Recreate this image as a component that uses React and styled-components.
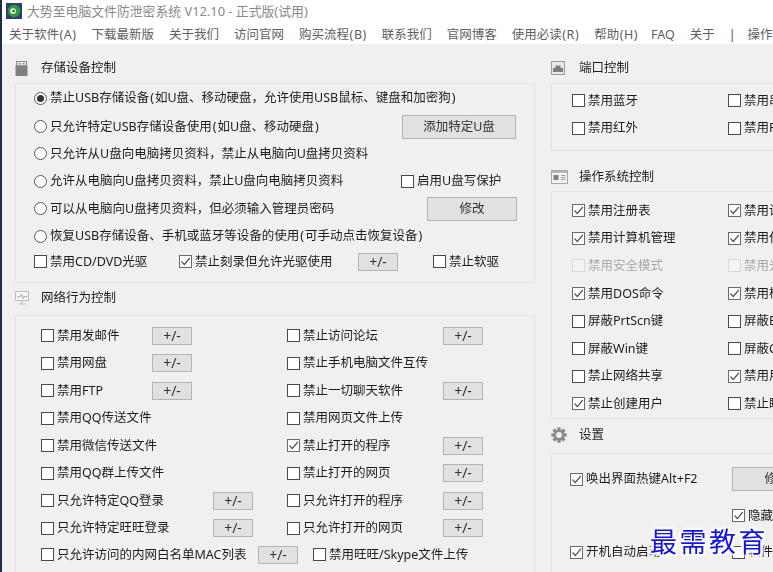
import React from "react";
import styled, { createGlobalStyle } from "styled-components";

const Global = createGlobalStyle`
  html, body { margin: 0; padding: 0; background: #f0f0f0; overflow: hidden; }
  #root { width: 773px; height: 572px; }
`;

const Page = styled.div`
  position: relative;
  width: 773px;
  height: 572px;
  overflow: hidden;
  background: #f0f0f0;
  font: 12.5px/16px "Noto Sans", "Noto Sans CJK SC", sans-serif;
  color: #1c1c1c;
  border-left: 2px solid #1c2f4a;
  box-sizing: border-box;
`;
const Soft = styled.div`
  filter: blur(0.35px);
`;
const TitleBar = styled.div`
  height: 22px;
  background: #fff;
  display: flex;
  align-items: center;
  padding: 0 0 0 4px;
  box-sizing: border-box;
  gap: 5px;
  color: #8a8a8a;
  font-size: 12.85px;
  white-space: nowrap;
`;
const MenuBar = styled.div`
  height: 22px;
  box-sizing: border-box;
  padding: 4px 0 0 7px;
  background: #fff;
  display: flex;
  align-items: center;
  gap: 15px;
  color: #5e5e5e;
  white-space: nowrap;
  overflow: hidden;
`;
const MenuItem = styled.span`
  margin-left: ${p => p.$ml || 0}px;
`;
const Divider = styled.span`
  margin: 0 -3px 0 -1px;
  color: #555;
`;
const Paren = styled.span`
  margin: 0 ${p => p.$m ?? 1}px;
`;
const Columns = styled.div`
  display: flex;
  padding-left: 13px;
  gap: 16px;
`;
const Column = styled.div`
  flex: 0 0 ${p => p.$w}px;
  width: ${p => p.$w}px;
`;
const Heading = styled.div`
  display: flex;
  align-items: center;
  height: 16px;
  padding: ${p => p.$pt}px 0 ${p => p.$pb}px;
  white-space: nowrap;
`;
const HeadIcon = styled.span`
  flex: 0 0 ${p => p.$w}px;
  width: ${p => p.$w}px;
  display: flex;
  align-items: center;
`;
const Panel = styled.div`
  border: 1px solid #e2e2e2;
  border-right: ${p => (p.$open ? "none" : "1px solid #e2e2e2")};
  padding: ${p => p.$pt || 0}px 0 ${p => p.$pb || 0}px ${p => p.$pl}px;
  height: ${p => p.$h}px;
  box-sizing: border-box;
`;
const Row = styled.div`
  display: flex;
  align-items: center;
  height: ${p => p.$h || 27.4}px;
  white-space: nowrap;
`;
const Item = styled.div`
  display: flex;
  align-items: center;
  flex: 0 0 auto;
  gap: ${p => p.$gap || 3}px;
  width: ${p => (p.$w ? p.$w + "px" : "auto")};
  margin-left: ${p => p.$ml || 0}px;
  color: ${p => (p.$off ? "#a8a8a8" : "inherit")};
`;
const Box = styled.span`
  flex: 0 0 13px;
  width: 13px;
  height: 13px;
  box-sizing: border-box;
  border: 1px solid ${p => (p.$off ? "#d9d9d9" : p.$on ? "#6a6a6a" : "#4a4a4a")};
  background: ${p => (p.$off ? "#f4f4f4" : "#fff")};
  display: flex;
  align-items: center;
  justify-content: center;
`;
const Circle = styled.span`
  flex: 0 0 13px;
  width: 13px;
  height: 13px;
  box-sizing: border-box;
  border: 1px solid #555;
  border-radius: 50%;
  background: #fff;
  display: flex;
  align-items: center;
  justify-content: center;
`;
const Dot = styled.span`
  width: 7px;
  height: 7px;
  border-radius: 50%;
  background: #333;
`;
const Btn = styled.div`
  flex: 0 0 ${p => p.$w || 40}px;
  width: ${p => p.$w || 40}px;
  height: ${p => p.$h || 18}px;
  box-sizing: border-box;
  border: 1px solid #b4b4b4;
  background: #e1e1e1;
  display: flex;
  align-items: center;
  justify-content: center;
  color: #333;
`;
const SignBtn = styled(Btn).attrs({ children: "+/-" })`
  font-size: 14px;
`;
const Grid = styled.div`
  display: grid;
  grid-template-columns: ${p => p.$col}px 1fr;
  white-space: nowrap;
`;
const Cell = styled.div`
  display: flex;
  align-items: center;
  height: ${p => p.$h || 27.5}px;
`;
const Watermark = styled.div`
  position: absolute;
  left: 648px;
  top: 525px;
  font: 400 27px/32px "Noto Sans CJK SC", sans-serif;
  letter-spacing: 2.5px;
  color: #1414e6;
  text-shadow: 0 0 2px #fff, 0 0 3px #fff, 2px 2px 2px #fff, -2px -2px 2px #fff, 2px -2px 2px #fff, -2px 2px 2px #fff, 2px 0 2px #fff, -2px 0 2px #fff;
  white-space: nowrap;
`;

const Tick = () => (
  <svg width="11" height="11" viewBox="0 0 11 11">
    <path d="M1.5 5.5 L4.3 8.5 L9.8 2" fill="none" stroke="#555" strokeWidth="1.2" />
  </svg>
);
const Check = ({ label, on, off, w, ml }) => (
  <Item $w={w} $ml={ml} $off={off}>
    <Box $on={on} $off={off}>{on && <Tick />}</Box>
    <span>{label}</span>
  </Item>
);
const Radio = ({ label, on, w }) => (
  <Item $w={w} $gap={3}>
    <Circle>{on && <Dot />}</Circle>
    <span>{label}</span>
  </Item>
);

const Logo = () => (
  <svg width="16" height="16" viewBox="0 0 18 18">
    <rect width="18" height="18" fill="#2b3f73" />
    <circle cx="9" cy="9" r="7" fill="#2f9a3a" />
    <circle cx="8" cy="9" r="3.2" fill="#f2f6e8" />
    <circle cx="8.6" cy="9" r="1.5" fill="#1f6d2b" />
  </svg>
);
const UsbIcon = () => (
  <svg width="13" height="15" viewBox="0 0 13 15">
    <rect x="1.5" y="0.5" width="10" height="4.5" fill="none" stroke="#8a8a8a" />
    <rect x="3.5" y="2" width="2" height="1.5" fill="#8a8a8a" />
    <rect x="7.5" y="2" width="2" height="1.5" fill="#8a8a8a" />
    <rect x="0.5" y="4.5" width="12" height="10.5" fill="#808080" />
  </svg>
);
const NetIcon = () => (
  <svg width="14" height="14" viewBox="0 0 14 14">
    <rect x="0.5" y="0.5" width="13" height="9" fill="#f6f6f6" stroke="#bcbcbc" />
    <path d="M2 6 L5 6 L6.5 3 L8 7.5 L9 5.5 L12 5.5" fill="none" stroke="#ababab" />
    <path d="M7 10 V13 M3.5 13 H10.5" stroke="#bcbcbc" />
  </svg>
);
const PortIcon = () => (
  <svg width="14" height="14" viewBox="0 0 14 14">
    <rect x="0.5" y="0.5" width="13" height="13" fill="#e8e8e8" stroke="#9a9a9a" />
    <path d="M2 11 V7 H4.5 V4.5 H9.5 V7 H12 V11 Z" fill="#7c7c7c" />
  </svg>
);
const OsIcon = () => (
  <svg width="17" height="14" viewBox="0 0 17 14">
    <rect x="0.5" y="0.5" width="16" height="13" fill="#f4f4f4" stroke="#a8a8a8" />
    <rect x="1" y="1" width="15" height="2" fill="#b8b8b8" />
    <rect x="2.5" y="5" width="5" height="5" fill="#808080" />
    <path d="M10 5.5 H14.5 M10 7.5 H14.5 M10 9.5 H14.5" stroke="#a0a0a0" />
  </svg>
);
const GearIcon = () => (
  <svg width="16" height="16" viewBox="0 0 16 16">
    <g fill="#8c8c8c">
      {[0, 45, 90, 135, 180, 225, 270, 315].map(a => (
        <rect key={a} x="6.3" y="0.3" width="3.4" height="4" transform={`rotate(${a} 8 8)`} />
      ))}
    </g>
    <circle cx="8" cy="8" r="4.2" fill="none" stroke="#8c8c8c" strokeWidth="2.6" />
  </svg>
);

const menu = [
  ["关于软件", "A"], ["下载最新版"], ["关于我们"], ["访问官网"], ["购买流程", "B"],
  ["联系我们"], ["官网博客"], ["使用必读", "R"], ["帮助", "H"], ["FAQ"], ["关于"],
];
const osRows = [
  [["禁用注册表", 1], ["禁用设备管理器", 1]],
  [["禁用计算机管理", 1], ["禁用任务管理器", 1]],
  [["禁用安全模式", 0, 1], ["禁用光驱", 0, 1]],
  [["禁用DOS命令", 1], ["禁用检查", 1]],
  [["屏蔽PrtScn键", 0], ["屏蔽Esc键", 0]],
  [["屏蔽Win键", 0], ["屏蔽Ctrl键", 0]],
  [["禁止网络共享", 0], ["禁用用户", 1]],
  [["禁止创建用户", 1], ["禁止睡眠", 0]],
];
const L = () => <Paren>(</Paren>;
const R = () => <Paren>)</Paren>;

export default function App() {
  return (
    <Page>
      <Global />
      <Soft>
        <TitleBar>
          <Logo />
          <span>大势至电脑文件防泄密系统 V12.10 - 正式版(试用)</span>
        </TitleBar>
        <MenuBar>
          {menu.map(([m, k]) => (
            <MenuItem key={m} $ml={m === "FAQ" ? -2 : 0}>
              {m}{k && <><Paren $m={0.5}>(</Paren>{k}<Paren $m={0.5}>)</Paren></>}
            </MenuItem>
          ))}
          <Divider>|</Divider>
          <MenuItem>操作</MenuItem>
        </MenuBar>
        <Columns>
          <Column $w={520}>
            <Heading $pt={16} $pb={7}>
              <HeadIcon $w={26}><UsbIcon /></HeadIcon>存储设备控制
            </Heading>
            <Panel $pl={18} $h={200}>
              <Row $h={28.9}><Radio on label={<>禁止USB存储设备<L />如U盘、移动硬盘，允许使用USB鼠标、键盘和加密狗<R /></>} /></Row>
              <Row><Radio w={368} label={<>只允许特定USB存储设备使用<L />如U盘、移动硬盘<R /></>} /><Btn $w={114} $h={24}>添加特定U盘</Btn></Row>
              <Row><Radio label="只允许从U盘向电脑拷贝资料，禁止从电脑向U盘拷贝资料" /></Row>
              <Row><Radio w={367} label="允许从电脑向U盘拷贝资料，禁止U盘向电脑拷贝资料" /><Check label="启用U盘写保护" /></Row>
              <Row><Radio w={393} label="可以从电脑向U盘拷贝资料，但必须输入管理员密码" /><Btn $w={90} $h={24}>修改</Btn></Row>
              <Row><Radio label={<>恢复USB存储设备、手机或蓝牙等设备的使用<L />可手动点击恢复设备<R /></>} /></Row>
              <Row $h={24}>
                <Check w={145} label="禁用CD/DVD光驱" />
                <Check w={179} on label="禁止刻录但允许光驱使用" />
                <SignBtn />
                <Check ml={35} label="禁止软驱" />
              </Row>
            </Panel>
            <Heading $pt={7} $pb={9}>
              <HeadIcon $w={26}><NetIcon /></HeadIcon>网络行为控制
            </Heading>
            <Panel $pl={25} $pt={6} $h={260}>
              <Grid $col={246}>
                <Cell><Check w={111} label="禁用发邮件" /><SignBtn /></Cell>
                <Cell><Check w={156} label="禁止访问论坛" /><SignBtn /></Cell>
                <Cell><Check w={111} label="禁用网盘" /><SignBtn /></Cell>
                <Cell><Check label="禁止手机电脑文件互传" /></Cell>
                <Cell><Check w={111} label="禁用FTP" /><SignBtn /></Cell>
                <Cell><Check w={156} label="禁止一切聊天软件" /><SignBtn /></Cell>
                <Cell><Check label="禁用QQ传送文件" /></Cell>
                <Cell><Check label="禁用网页文件上传" /></Cell>
                <Cell><Check label="禁用微信传送文件" /></Cell>
                <Cell><Check w={156} on label="禁止打开的程序" /><SignBtn /></Cell>
                <Cell><Check label="禁用QQ群上传文件" /></Cell>
                <Cell><Check w={156} label="禁止打开的网页" /><SignBtn /></Cell>
                <Cell><Check w={172} label="只允许特定QQ登录" /><SignBtn /></Cell>
                <Cell><Check w={156} label="只允许打开的程序" /><SignBtn /></Cell>
                <Cell><Check w={172} label="只允许特定旺旺登录" /><SignBtn /></Cell>
                <Cell><Check w={156} label="只允许打开的网页" /><SignBtn /></Cell>
              </Grid>
              <Row $h={25}>
                <Check w={217} label="只允许访问的内网白名单MAC列表" />
                <SignBtn />
                <Check ml={15} label="禁用旺旺/Skype文件上传" />
              </Row>
            </Panel>
          </Column>
          <Column $w={240}>
            <Heading $pt={16} $pb={7}>
              <HeadIcon $w={28}><PortIcon /></HeadIcon>端口控制
            </Heading>
            <Panel $open $pl={20} $pt={3} $h={68}>
              <Grid $col={156}>
                <Cell><Check label="禁用蓝牙" /></Cell>
                <Cell><Check label="禁用串口" /></Cell>
                <Cell><Check label="禁用红外" /></Cell>
                <Cell><Check label="禁用PCMCIA" /></Cell>
              </Grid>
            </Panel>
            <Heading $pt={18} $pb={6}>
              <HeadIcon $w={28}><OsIcon /></HeadIcon>操作系统控制
            </Heading>
            <Panel $open $pl={20} $pt={5} $h={228}>
              <Grid $col={156}>
                {osRows.flat().map(([label, on, off]) => (
                  <Cell key={label} $h={27.6}>
                    <Check label={label} on={!!on} off={!!off} />
                  </Cell>
                ))}
              </Grid>
            </Panel>
            <Heading $pt={8} $pb={10}>
              <HeadIcon $w={28}><GearIcon /></HeadIcon>设置
            </Heading>
            <Panel $open $pl={18} $pt={7} $h={140}>
              <Grid $col={162}>
                <Cell $h={36}><Check on label="唤出界面热键Alt+F2" /></Cell>
                <Cell $h={36}><Btn $w={90} $h={24}>修改</Btn></Cell>
                <Cell $h={37} />
                <Cell $h={37}><Check on label="隐藏" /></Cell>
                <Cell $h={36}><Check on label="开机自动启动" /></Cell>
                <Cell $h={36}><Check label="软件" /></Cell>
              </Grid>
            </Panel>
          </Column>
        </Columns>
      </Soft>
      <Watermark>最需教育</Watermark>
    </Page>
  );
}
